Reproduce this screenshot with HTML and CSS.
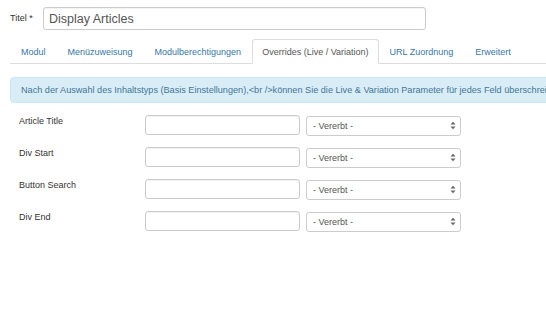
FILE: index.html
```html
<!DOCTYPE html>
<html lang="de">
<head>
<meta charset="utf-8">
<title>Modul</title>
<link rel="stylesheet" href="styles.css">
</head>
<body>
<div class="page">
  <div class="title-row">
    <label class="title-label">Titel *</label>
    <input class="title-input" type="text" value="Display Articles">
  </div>
  <ul class="tabs">
    <li class="tab"><a>Modul</a></li>
    <li class="tab"><a>Menüzuweisung</a></li>
    <li class="tab"><a>Modulberechtigungen</a></li>
    <li class="tab active"><a>Overrides (Live / Variation)</a></li>
    <li class="tab"><a>URL Zuordnung</a></li>
    <li class="tab"><a>Erweitert</a></li>
  </ul>
  <div class="alert">Nach der Auswahl des Inhaltstyps (Basis Einstellungen),&lt;br /&gt;können Sie die Live &amp; Variation Parameter für jedes Feld überschreiben.</div>
  <div class="fields">
    <div class="field">
      <label class="field-label">Article Title</label>
      <input class="field-input" type="text">
      <div class="select-wrap"><select class="field-select"><option>- Vererbt -</option></select><svg class="caret" width="6" height="9" viewBox="0 0 6 9"><path d="M0.5 3.5 L3 0.8 L5.5 3.5 Z M0.5 5.5 L3 8.2 L5.5 5.5 Z" fill="#666"/></svg></div>
    </div>
    <div class="field">
      <label class="field-label">Div Start</label>
      <input class="field-input" type="text">
      <div class="select-wrap"><select class="field-select"><option>- Vererbt -</option></select><svg class="caret" width="6" height="9" viewBox="0 0 6 9"><path d="M0.5 3.5 L3 0.8 L5.5 3.5 Z M0.5 5.5 L3 8.2 L5.5 5.5 Z" fill="#666"/></svg></div>
    </div>
    <div class="field">
      <label class="field-label">Button Search</label>
      <input class="field-input" type="text">
      <div class="select-wrap"><select class="field-select"><option>- Vererbt -</option></select><svg class="caret" width="6" height="9" viewBox="0 0 6 9"><path d="M0.5 3.5 L3 0.8 L5.5 3.5 Z M0.5 5.5 L3 8.2 L5.5 5.5 Z" fill="#666"/></svg></div>
    </div>
    <div class="field">
      <label class="field-label">Div End</label>
      <input class="field-input" type="text">
      <div class="select-wrap"><select class="field-select"><option>- Vererbt -</option></select><svg class="caret" width="6" height="9" viewBox="0 0 6 9"><path d="M0.5 3.5 L3 0.8 L5.5 3.5 Z M0.5 5.5 L3 8.2 L5.5 5.5 Z" fill="#666"/></svg></div>
    </div>
  </div>
</div>
</body>
</html>
```
FILE: styles.css
```css
html, body {
  margin: 0;
  padding: 0;
  background: #fff;
  overflow: hidden;
}
body {
  font-family: "Liberation Sans", Arial, sans-serif;
  color: #333;
  width: 546px;
  height: 319px;
}
.page {
  width: 800px;
  padding: 7px 0 0 10px;
}
.title-row {
  display: flex;
  align-items: center;
  height: 23px;
}
.title-label {
  font-size: 9px;
  width: 33px;
  margin-top: -2px;
  color: #333;
}
.title-input {
  box-sizing: border-box;
  width: 383px;
  height: 23px;
  border: 1px solid #ccc;
  border-radius: 3px;
  padding: 0 5px;
  font-family: inherit;
  font-size: 12.5px;
  color: #555;
  box-shadow: inset 0 1px 1px rgba(0,0,0,0.05);
  outline: none;
}
.tabs {
  list-style: none;
  margin: 9px 0 0 0;
  padding: 0;
  display: flex;
  border-bottom: 1px solid #ddd;
  height: 24px;
}
.tab {
  margin-bottom: -1px;
}
.tab a {
  display: block;
  box-sizing: border-box;
  height: 25px;
  line-height: 24px;
  padding: 0 10px;
  font-size: 9px;
  color: #3577aa;
  border: 1px solid transparent;
  border-radius: 3px 3px 0 0;
}
.tab.active a {
  color: #555;
  background: #fff;
  border-color: #ddd #ddd transparent #ddd;
  padding: 0 9px;
}
.alert {
  box-sizing: border-box;
  margin-top: 13px;
  height: 26px;
  line-height: 24px;
  padding: 0 10px;
  background: #d9edf7;
  border: 1px solid #c8e7f2;
  border-radius: 4px;
  color: #3f7799;
  font-size: 9.15px;
  white-space: nowrap;
}
.fields {
  margin-top: 12px;
  padding-left: 9px;
}
.field {
  display: flex;
  align-items: flex-start;
  height: 20px;
  margin-bottom: 12px;
}
.field-label {
  width: 126px;
  font-size: 9px;
  color: #333;
  padding-top: 1px;
}
.field-input {
  box-sizing: border-box;
  width: 155px;
  height: 20px;
  border: 1px solid #ccc;
  border-radius: 3px;
  padding: 0 5px;
  box-shadow: inset 0 1px 1px rgba(0,0,0,0.06);
  outline: none;
  margin: 0;
}
.select-wrap {
  position: relative;
  margin-left: 6px;
  width: 155px;
  height: 20px;
}
.field-select {
  -webkit-appearance: none;
  appearance: none;
  box-sizing: border-box;
  width: 155px;
  height: 20px;
  border: 1px solid #ccc;
  border-radius: 3px;
  background: #fff;
  padding: 0 6px;
  font-family: inherit;
  font-size: 9px;
  color: #555;
  margin: 0;
  outline: none;
}
.caret {
  position: absolute;
  right: 5px;
  top: 6px;
}
```
